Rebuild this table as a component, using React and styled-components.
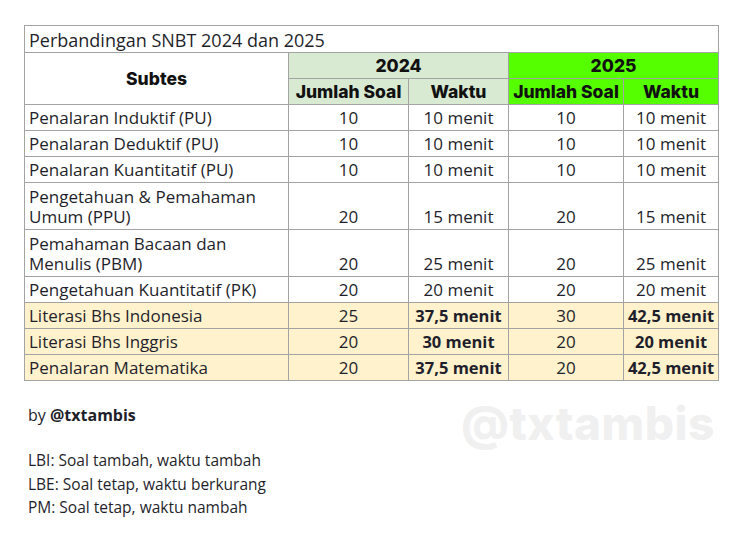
import React from 'react';
import styled, { createGlobalStyle } from 'styled-components';

const GlobalStyle = createGlobalStyle`
    body {
        margin: 0;
        background: #fff;
        font-family: "Open Sans", Lato, sans-serif;
        color: #1f1f2b;
    }
`;

const Page = styled.div`
    width: 740px;
    height: 540px;
    box-sizing: border-box;
    padding: 25px 0 0 24px;
`;

const Table = styled.table`
    border-collapse: collapse;
    table-layout: fixed;
    width: 694px;
    font-size: 17px;

    td, th {
        border: 1px solid #a3a3a3;
        padding: 0 4px 2px;
        vertical-align: bottom;
        line-height: 20px;
    }
`;

const TitleCell = styled.td`
    height: 24px;
    text-align: left;
    font-size: 18px;
`;

const HeadCell = styled.th`
    height: 25px;
    text-align: center;
    font-family: Inter, sans-serif;
    font-weight: 800;
    font-size: 17.5px;
    vertical-align: middle !important;
    background: ${p => p.$bg || '#fff'};
    color: #111;
    white-space: nowrap;
    padding: 0 !important;
`;

const Row = styled.tr`
    background: ${p => (p.$hl ? '#fff2cc' : '#fff')};

    td {
        height: ${p => (p.$tall ? 44 : 23)}px;
    }
`;

const NameCell = styled.td`
    text-align: left;
`;

const NumCell = styled.td`
    text-align: center;
    font-weight: ${p => (p.$bold ? 700 : 400)};
    font-size: ${p => (p.$bold ? '16.5px' : 'inherit')};
    white-space: nowrap;
    padding-left: 2px !important;
    padding-right: 2px !important;
`;

const Footer = styled.div`
    display: flex;
    justify-content: space-between;
    align-items: flex-start;
    width: 694px;
    margin-top: 22px;
    padding-left: 4px;
    box-sizing: border-box;
`;

const Byline = styled.div`
    font-size: 16px;
    line-height: 24px;

    b {
        font-weight: 700;
    }
`;

const Watermark = styled.div`
    font-family: Inter, sans-serif;
    font-weight: 800;
    font-size: 46px;
    line-height: 42px;
    color: #f0f0f0;
    letter-spacing: 0.5px;
    margin-top: -1px;
    margin-right: 3px;
    margin-bottom: 3px;
`;

const Notes = styled.div`
    margin-top: 2px;
    padding-left: 4px;
    font-size: 15.5px;
    line-height: 23.5px;
`;

const rows = [
    ['Penalaran Induktif (PU)', '10', '10 menit', '10', '10 menit'],
    ['Penalaran Deduktif (PU)', '10', '10 menit', '10', '10 menit'],
    ['Penalaran Kuantitatif (PU)', '10', '10 menit', '10', '10 menit'],
    ['Pengetahuan & Pemahaman Umum (PPU)', '20', '15 menit', '20', '15 menit', 'tall'],
    ['Pemahaman Bacaan dan Menulis (PBM)', '20', '25 menit', '20', '25 menit', 'tall'],
    ['Pengetahuan Kuantitatif (PK)', '20', '20 menit', '20', '20 menit'],
    ['Literasi Bhs Indonesia', '25', '37,5 menit', '30', '42,5 menit', 'hl'],
    ['Literasi Bhs Inggris', '20', '30 menit', '20', '20 menit', 'hl'],
    ['Penalaran Matematika', '20', '37,5 menit', '20', '42,5 menit', 'hl'],
];

const App = () => (
    <Page>
        <GlobalStyle />
        <Table>
            <colgroup>
                <col style={{ width: 264 }} />
                <col style={{ width: 120 }} />
                <col style={{ width: 100 }} />
                <col style={{ width: 115 }} />
                <col style={{ width: 95 }} />
            </colgroup>
            <tbody>
                <tr>
                    <TitleCell colSpan={5}>Perbandingan SNBT 2024 dan 2025</TitleCell>
                </tr>
                <tr>
                    <HeadCell rowSpan={2}>Subtes</HeadCell>
                    <HeadCell colSpan={2} $bg="#d9ead3">2024</HeadCell>
                    <HeadCell colSpan={2} $bg="#55ff00">2025</HeadCell>
                </tr>
                <tr>
                    <HeadCell $bg="#d9ead3">Jumlah Soal</HeadCell>
                    <HeadCell $bg="#d9ead3">Waktu</HeadCell>
                    <HeadCell $bg="#55ff00">Jumlah Soal</HeadCell>
                    <HeadCell $bg="#55ff00">Waktu</HeadCell>
                </tr>
                {rows.map(([name, a, b, c, d, kind]) => (
                    <Row key={name} $tall={kind === 'tall'} $hl={kind === 'hl'}>
                        <NameCell>{name}</NameCell>
                        <NumCell>{a}</NumCell>
                        <NumCell $bold={kind === 'hl'}>{b}</NumCell>
                        <NumCell>{c}</NumCell>
                        <NumCell $bold={kind === 'hl'}>{d}</NumCell>
                    </Row>
                ))}
            </tbody>
        </Table>
        <Footer>
            <Byline>by <b>@txtambis</b></Byline>
            <Watermark>@txtambis</Watermark>
        </Footer>
        <Notes>
            <div>LBI: Soal tambah, waktu tambah</div>
            <div>LBE: Soal tetap, waktu berkurang</div>
            <div>PM: Soal tetap, waktu nambah</div>
        </Notes>
    </Page>
);

export default App;
